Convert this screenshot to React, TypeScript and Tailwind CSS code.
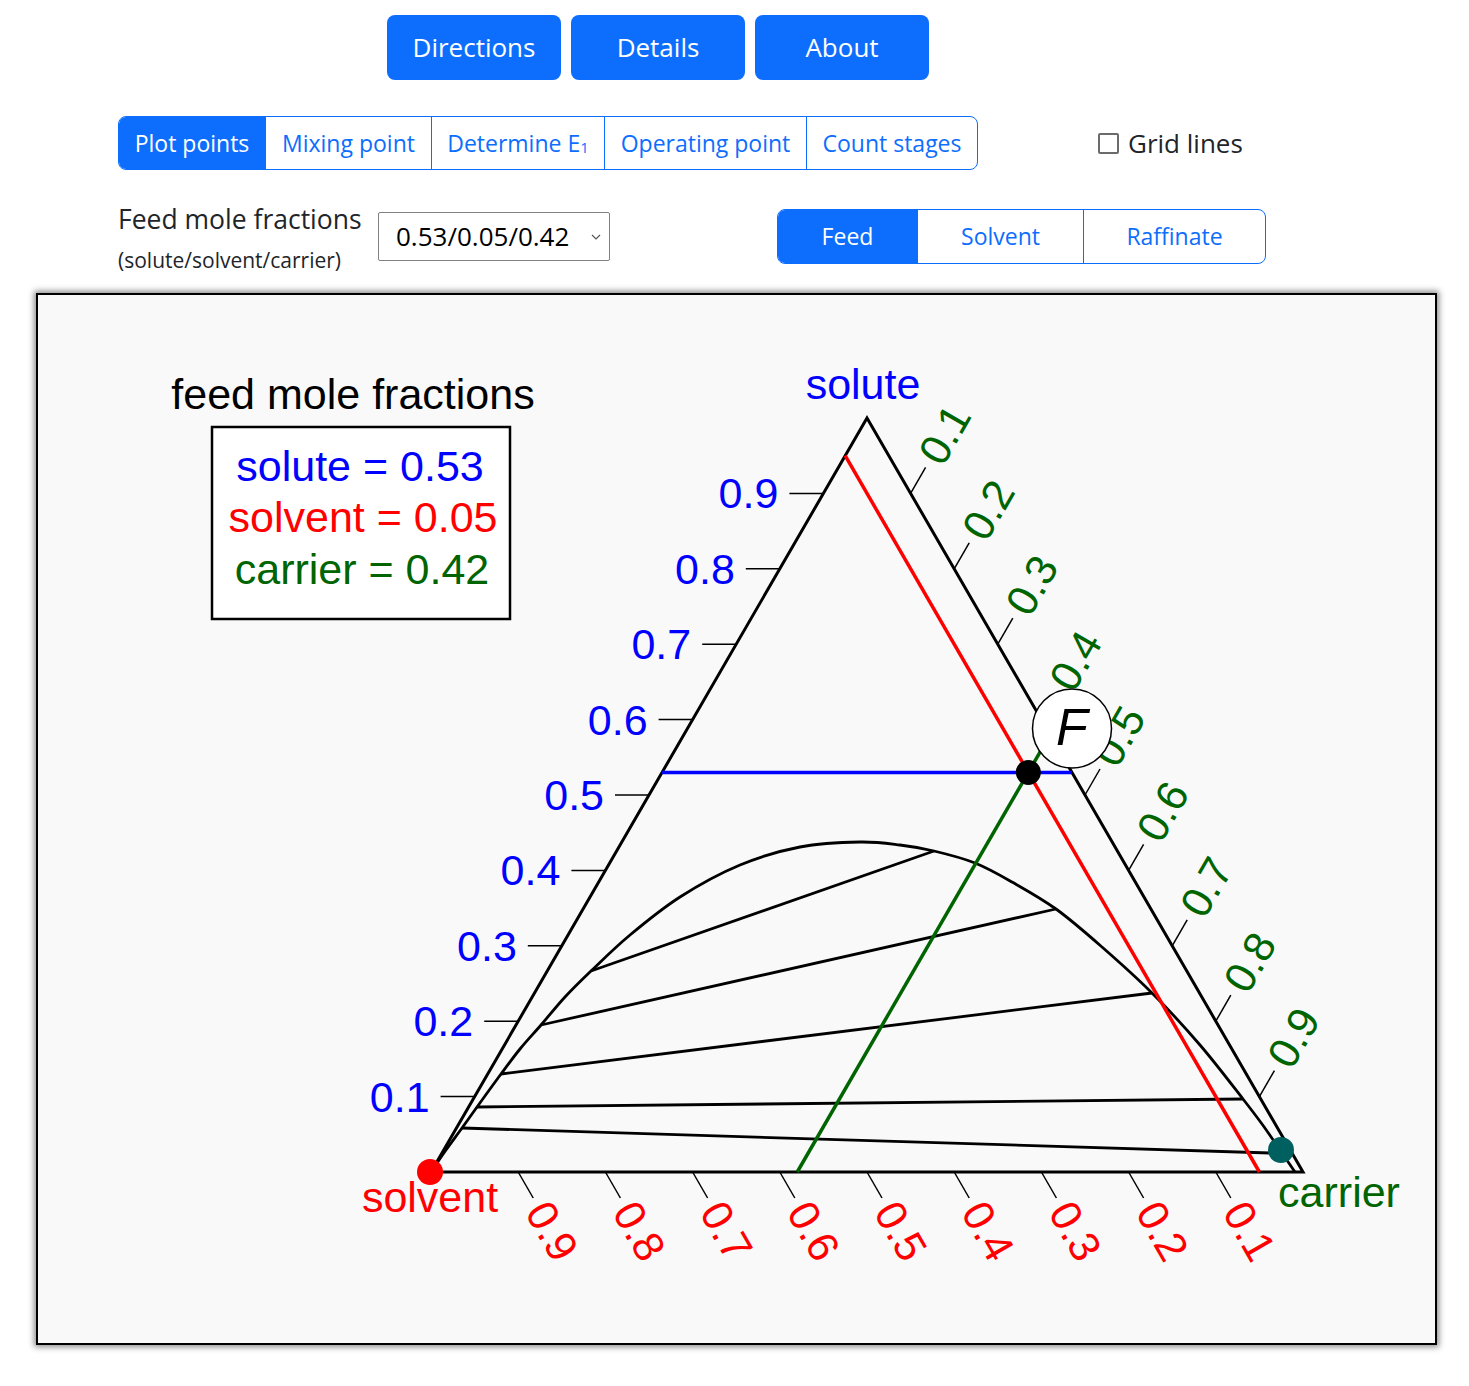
import React from 'react';

const BLUE = '#0000ff';
const RED = '#ff0000';
const GREEN = '#006400';

// triangle vertices (page px, the svg viewBox uses the same numbers)
const TOP = { x: 867, y: 418 };
const LEFT = { x: 431, y: 1172 };
const RIGHT = { x: 1303, y: 1172 };

const pt = (solute: number, carrier: number) => ({
  x: 431 + carrier * 872 + solute * 436,
  y: 1172 - solute * 754,
});

const ticks = [0.1, 0.2, 0.3, 0.4, 0.5, 0.6, 0.7, 0.8, 0.9];

const envelope: [number, number][] = [
  [431, 1172], [446, 1150], [462, 1128], [477, 1107], [501, 1074], [520, 1049],
  [541, 1025], [565, 997], [591, 971], [630, 935], [680, 897], [740, 865],
  [800, 847], [860, 842], [900, 845], [934, 851], [975, 863], [1012, 882],
  [1056, 909], [1102, 947], [1152, 993], [1200, 1045], [1243, 1099],
  [1262, 1124], [1280, 1150], [1295, 1172],
];

const tieLines: [number, number, number, number][] = [
  [462, 1128, 1270, 1153],
  [477, 1107, 1243, 1099],
  [501, 1074, 1152, 993],
  [541, 1025, 1056, 909],
  [591, 971, 934, 851],
];

function smoothPath(pts: [number, number][]) {
  let d = `M${pts[0][0]},${pts[0][1]}`;
  for (let i = 0; i < pts.length - 1; i++) {
    const p0 = pts[i - 1] || pts[i];
    const p1 = pts[i];
    const p2 = pts[i + 1];
    const p3 = pts[i + 2] || p2;
    const c1x = p1[0] + (p2[0] - p0[0]) / 6;
    const c1y = p1[1] + (p2[1] - p0[1]) / 6;
    const c2x = p2[0] - (p3[0] - p1[0]) / 6;
    const c2y = p2[1] - (p3[1] - p1[1]) / 6;
    d += ` C${c1x.toFixed(1)},${c1y.toFixed(1)} ${c2x.toFixed(1)},${c2y.toFixed(1)} ${p2[0]},${p2[1]}`;
  }
  return d;
}

const TernaryPlot: React.FC = () => {
  const feed = pt(0.53, 0.42);
  const font = '"Liberation Sans", Arial, sans-serif';
  return (
    <svg width={1397} height={1048} viewBox="38 295 1397 1048" style={{ fontFamily: font }}>
      {/* legend */}
      <text x={353} y={409} fontSize={43} textAnchor="middle" fill="#000">feed mole fractions</text>
      <rect x={212} y={427} width={298} height={192} fill="#fff" stroke="#000" strokeWidth={2.5} />
      <text x={360} y={481} fontSize={43} textAnchor="middle" fill={BLUE}>solute = 0.53</text>
      <text x={363} y={532} fontSize={43} textAnchor="middle" fill={RED}>solvent = 0.05</text>
      <text x={362} y={584} fontSize={43} textAnchor="middle" fill={GREEN}>carrier = 0.42</text>

      {/* corner labels */}
      <text x={863} y={399} fontSize={43} textAnchor="middle" fill={BLUE}>solute</text>
      <text x={430} y={1212} fontSize={43} textAnchor="middle" fill={RED}>solvent</text>
      <text x={1339} y={1207} fontSize={43} textAnchor="middle" fill={GREEN}>carrier</text>

      {/* solute axis (left) */}
      {ticks.map((s) => {
        const p = pt(s, 0);
        return (
          <g key={`b${s}`}>
            <line x1={p.x} y1={p.y} x2={p.x - 34} y2={p.y} stroke="#000" strokeWidth={1.5} />
            <text x={p.x - 45} y={p.y + 15} fontSize={43} textAnchor="end" fill={BLUE}>{s.toFixed(1)}</text>
          </g>
        );
      })}

      {/* carrier axis (right) */}
      {ticks.map((c) => {
        const p = pt(1 - c, c);
        return (
          <g key={`g${c}`}>
            <line x1={p.x} y1={p.y} x2={p.x + 15} y2={p.y - 26} stroke="#000" strokeWidth={1.5} />
            <text transform={`translate(${p.x + 34},${p.y - 59}) rotate(-60)`} x={0} y={15} fontSize={43} textAnchor="middle" fill={GREEN}>
              {c.toFixed(1)}
            </text>
          </g>
        );
      })}

      {/* solvent axis (bottom) */}
      {ticks.map((s) => {
        const x = 1303 - s * 872;
        return (
          <g key={`r${s}`}>
            <line x1={x} y1={1172} x2={x + 15} y2={1198} stroke="#000" strokeWidth={1.5} />
            <text transform={`translate(${x + 34},${1172 + 59}) rotate(60)`} x={0} y={15} fontSize={43} textAnchor="middle" fill={RED}>
              {s.toFixed(1)}
            </text>
          </g>
        );
      })}

      {/* phase envelope and tie lines */}
      <path d={smoothPath(envelope)} fill="none" stroke="#000" strokeWidth={2.8} />
      {tieLines.map(([x1, y1, x2, y2], i) => (
        <line key={i} x1={x1} y1={y1} x2={x2} y2={y2} stroke="#000" strokeWidth={2.8} />
      ))}

      {/* triangle */}
      <polygon
        points={`${TOP.x},${TOP.y} ${LEFT.x},${LEFT.y} ${RIGHT.x},${RIGHT.y}`}
        fill="none"
        stroke="#000"
        strokeWidth={3}
        strokeLinejoin="miter"
      />

      {/* feed composition lines */}
      <line x1={pt(0.53, 0).x} y1={feed.y} x2={pt(0.53, 0.47).x} y2={feed.y} stroke={BLUE} strokeWidth={3.5} />
      <line x1={pt(0.95, 0).x} y1={pt(0.95, 0).y} x2={pt(0, 0.95).x} y2={1172} stroke={RED} strokeWidth={3.5} />
      <line x1={pt(0, 0.42).x} y1={1172} x2={pt(0.58, 0.42).x} y2={pt(0.58, 0.42).y} stroke={GREEN} strokeWidth={3.5} />

      {/* points */}
      <circle cx={feed.x} cy={feed.y} r={12.5} fill="#000" />
      <circle cx={430} cy={1172} r={13} fill={RED} />
      <circle cx={1281} cy={1150} r={13} fill="#006060" />

      <circle cx={1072} cy={728.5} r={39.5} fill="#fff" stroke="#000" strokeWidth={1.5} />
      <text x={1072} y={745} fontSize={52} fontStyle="italic" textAnchor="middle" fill="#000">F</text>
    </svg>
  );
};

const topButtons = ['Directions', 'Details', 'About'];

const App: React.FC = () => {
  const ui = { fontFamily: '"Open Sans", "Noto Sans", sans-serif' };
  return (
    <div className="min-h-screen w-[1469px] bg-white text-[#212529]" style={ui}>
      {/* header buttons */}
      <div className="flex gap-[10px] pl-[387px] pt-[15px]">
        {topButtons.map((b) => (
          <button
            key={b}
            className="h-[65px] w-[174px] rounded-[8px] bg-[#0d6efd] text-[26px] text-white"
          >
            {b}
          </button>
        ))}
      </div>

      {/* step tabs + grid lines */}
      <div className="mt-[36px] flex items-center pl-[118px]">
        <div className="flex h-[54px] overflow-hidden rounded-[8px] border-[1.5px] border-[#0d6efd] text-[23px]">
          <div className="flex w-[146px] items-center justify-center bg-[#0d6efd] text-white">Plot points</div>
          <div className="flex w-[166px] items-center justify-center border-l-[1.5px] border-[#0d6efd] text-[#0d6efd]">Mixing point</div>
          <div className="flex w-[173px] items-center justify-center border-l-[1.5px] border-[#0d6efd] text-[#0d6efd]">
            Determine E<sub className="text-[15px]">1</sub>
          </div>
          <div className="flex w-[202px] items-center justify-center border-l-[1.5px] border-[#0d6efd] text-[#0d6efd]">Operating point</div>
          <div className="flex w-[171px] items-center justify-center border-l-[1.5px] border-[#0d6efd] text-[#0d6efd]">Count stages</div>
        </div>
        <label className="ml-[120px] flex items-center gap-[9px] text-[26px]">
          <span className="h-[21px] w-[21px] rounded-[2px] border-2 border-[#6b6b6b] bg-white" />
          Grid lines
        </label>
      </div>

      {/* feed composition row */}
      <div className="mt-[32px] flex items-start pl-[118px]">
        <div className="w-[260px]">
          <div className="text-[26.5px] leading-[34px]">Feed mole fractions</div>
          <div className="mt-[10px] text-[21px] leading-[28px]">(solute/solvent/carrier)</div>
        </div>
        <div className="mt-[10px] flex h-[49px] w-[232px] items-center justify-between rounded-[2px] border border-[#808080] bg-white pl-[17px] pr-[8px] text-[26px] text-black">
          <span>0.53/0.05/0.42</span>
          <svg width="10" height="6" viewBox="0 0 10 6">
            <path d="M1 1l4 4 4-4" fill="none" stroke="#555" strokeWidth="1.2" />
          </svg>
        </div>
        <div className="ml-[167px] mt-[7px] flex h-[55px] overflow-hidden rounded-[8px] border-[1.5px] border-[#0d6efd] text-[23px]">
          <div className="flex w-[139px] items-center justify-center bg-[#0d6efd] text-white">Feed</div>
          <div className="flex w-[166px] items-center justify-center border-l-[1.5px] border-[#0d6efd] text-[#0d6efd]">Solvent</div>
          <div className="flex w-[182px] items-center justify-center border-l-[1.5px] border-[#0d6efd] text-[#0d6efd]">Raffinate</div>
        </div>
      </div>

      {/* plot */}
      <div className="ml-[36px] mt-[19px] h-[1052px] w-[1401px] border-2 border-black bg-[#f9f9f9] shadow-[0_0_6px_2px_rgba(0,0,0,0.45)]">
        <TernaryPlot />
      </div>
    </div>
  );
};

export default App;
